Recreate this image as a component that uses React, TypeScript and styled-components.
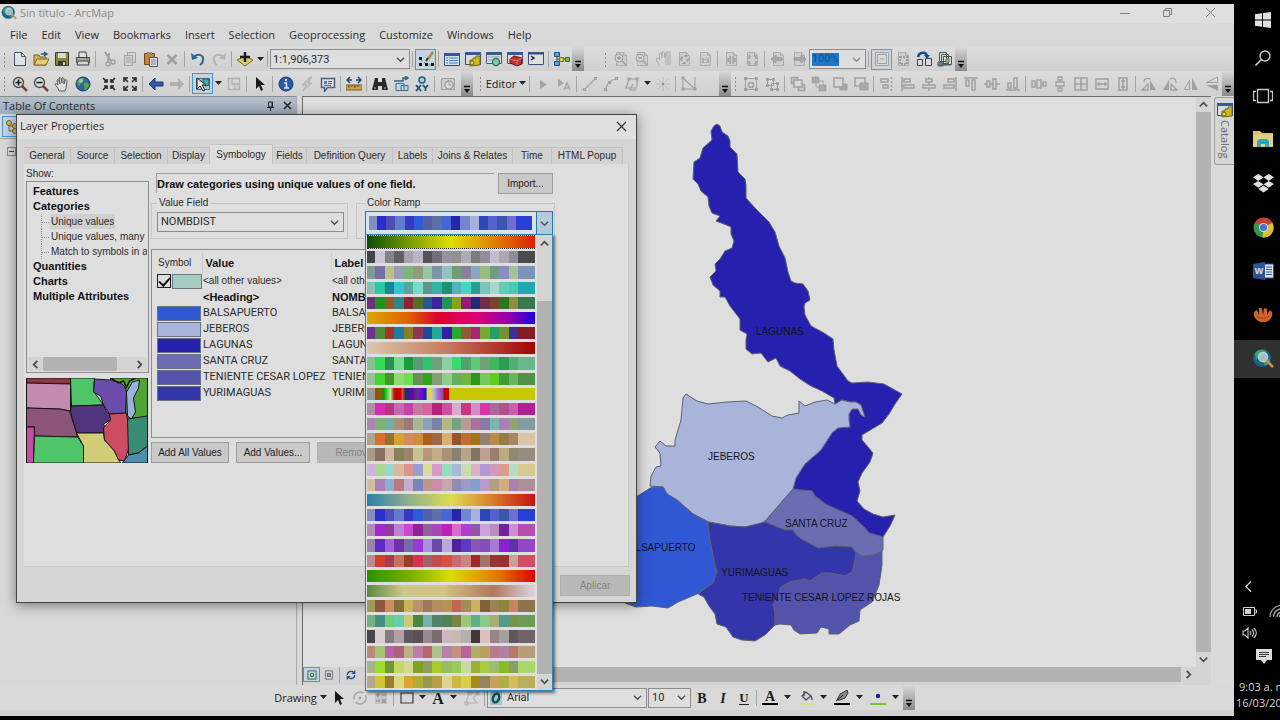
import React from "react";
import styled, { createGlobalStyle, css } from "styled-components";

const ui = `"Open Sans", "Noto Sans", sans-serif`;
const sans = `"Liberation Sans", Arial, sans-serif`;
const serif = `"Liberation Serif", "Times New Roman", serif`;
const caps = `11px/14px Roboto, ${sans}`;

const GlobalStyle = createGlobalStyle`
  * { box-sizing: border-box; }
  body { margin: 0; background: #000; overflow: hidden; }
  button, input, select { font: inherit; color: inherit; margin: 0; }
  button { border: 0; background: none; padding: 0; white-space: nowrap; }
  svg { display: block; flex: none; }
`;

/* ---------- icons ---------- */

const G = "#a0a0a0";
const page = <path d="M3.500 1.500h7l3 3v10h-10z M10.500 1.500v3h3" fill="#cfcfcf" stroke="#acacac" />;
const letter = { fontFamily: serif, fontWeight: "bold", fill: "#1c1c1c", textAnchor: "middle" as const };

const glyphs: Record<string, React.ReactNode> = {
  "New": <><path d="M2.500 1.500h7l4 4v9h-11z" fill="#dfe3e8" stroke="#4c5666" /><path d="M9.500 1.500v4h4" fill="none" stroke="#4c5666" /></>,
  "Open": <><path d="M1 14V4h5l1 2h6v8z" fill="#d0b458" stroke="#7c6424" /><path d="M1 14l3-6h12l-3 6z" fill="#e0cc78" stroke="#7c6424" /><path d="M8 3h5M11 1l3 2-3 2" fill="none" stroke="#1c5c9c" strokeWidth="1.500" /></>,
  "Save": <><path d="M1.500 1.500h13v13h-13z" fill="#8c8434" stroke="#3c3c24" /><path d="M4 2h8v5H4z" fill="#d8dccc" /><path d="M4 10h8v4H4z" fill="#3c3c34" /><path d="M9 11h2v3H9z" fill="#ccc" /></>,
  "Print": <><path d="M4 1h7l1 6H4z" fill="#dcdcdc" stroke="#444" /><path d="M1.500 6.500h13v5h-13z" fill="#a4a8a4" stroke="#404440" /><path d="M3 10h10l1 4H2z" fill="#d4d8c8" stroke="#404440" /><path d="M11 8h2" stroke="#3c9c3c" /></>,
  "Cut": <><path d="M4 1l6 9M8 2L7 10" fill="none" stroke={G} strokeWidth="2" /><circle cx="12" cy="11" r="2" fill="none" stroke={G} strokeWidth="1.500" /><circle cx="7" cy="13" r="2" fill="none" stroke={G} strokeWidth="1.500" /></>,
  "Copy": <><path d="M5.500 1.500h8v10h-8z" fill="#d4d4d4" stroke={G} /><path d="M2.500 4.500h8v10h-8z" fill="#d4d4d4" stroke={G} /><path d="M4 7h5M4 9h5M4 11h5" stroke={G} /></>,
  "Paste": <><path d="M1.500 2.500h10v11h-10z" fill="#c48434" stroke="#6c4818" /><path d="M4 1h5v3H4z" fill="#8c8c84" /><path d="M6.500 6.500h8v9h-8z" fill="#dcdce0" stroke="#505868" /><path d="M8 9h5M8 11h5M8 13h5" stroke="#7888a4" /></>,
  "Delete": <path d="M3.500 4l9 9M12.500 4l-9 9" stroke={G} strokeWidth="2.500" />,
  "Undo": <><path d="M4 6c4-4 10-2 9 3 0 3-2 4-3 5" fill="none" stroke="#2c6494" strokeWidth="2" /><path d="M1 2l1 7 6-2z" fill="#2c6494" /></>,
  "Redo": <><path d="M12 6c-4-4-10-2-9 3 0 3 2 4 3 5" fill="none" stroke="#b4b4b4" strokeWidth="2" /><path d="M15 2l-1 7-6-2z" fill="#b4b4b4" /></>,
  "Add Data": <><path d="M0 9l8-4 8 4-8 6z" fill="#dccc64" stroke="#7c6c2c" /><path d="M8 1v10M3 6h10" stroke="#181818" strokeWidth="2.500" /></>,
  "Editor Toolbar": <><path d="M10 8l5-7" stroke="#b48c34" strokeWidth="2.500" /><path d="M8 10l2-3" stroke="#333" strokeWidth="2" /><path d="M2 7l2 3 3 2 4 2h4" fill="none" stroke="#555" strokeDasharray="1 2" /><path d="M1 12h3v3H1zM7 12h3v3H7zM13 12h3v3h-3zM1 6h3v3H1z" fill="#141414" /></>,
  "Contents": <><path d="M.5 2.500h15v12H.5z" fill="#d8dce4" stroke="#344c7c" /><path d="M0 2h16v3H0z" fill="#345c94" /><path d="M2 7h2M5 7h9M2 9.500h2M5 9.500h9M2 12h2M5 12h9" stroke="#4c84b8" /></>,
  "Catalog": <><path d="M.5 1.500h15v12H.5z" fill="#dcdcdc" stroke="#344c7c" /><path d="M0 1h16v3H0z" fill="#345c94" /><path d="M5 9h3V7h3V5h4v9l-10 1z" fill="#c8b824" stroke="#74680c" /><circle cx="7" cy="12" r="2" fill="#e0d448" stroke="#74680c" /></>,
  "Search Window": <><path d="M.5 1.500h15v11H.5z" fill="#dcdcdc" stroke="#4c5c7c" /><path d="M0 1h16v3H0z" fill="#345c94" /><path d="M2 6h12M2 9h5" stroke="#8ca0b8" /><circle cx="10" cy="11" r="3.500" fill="#8cc8b0" stroke="#2c7c6c" strokeWidth="1.500" /></>,
  "ArcToolbox": <><path d="M.5 1.500h15v11H.5z" fill="#dcdcdc" stroke="#4c5c7c" /><path d="M0 1h16v3H0z" fill="#345c94" /><path d="M3 8l4-3 8 2v6l-5 2-7-3z" fill="#b8342c" stroke="#74140c" /><path d="M3 8l7 2 5-3M10 10v4" fill="none" stroke="#e08474" /></>,
  "Python": <><path d="M.5 1.500h15v12H.5z" fill="#e0e0e4" stroke="#3c4c7c" /><path d="M0 1h16v2.500H0z" fill="#3c4c84" /><path d="M3 5l3 2-3 2" fill="none" stroke="#222" strokeWidth="1.500" /></>,
  "ModelBuilder": <><path d="M3 4v8M3 8h11" stroke="#444" /><path d="M.5 1.500h5v4h-5zM.5 10.500h5v4h-5z" fill="#58a0d8" stroke="#1c5088" /><path d="M5.500 6.500h4v4h-4z" fill="#e0c850" stroke="#7c6c14" /><path d="M11.500 6.500h4v4h-4z" fill="#78c050" stroke="#347014" /></>,
  "Layout Zoom In": <>{page}<circle cx="6" cy="7" r="4" fill="#d0d0d0" stroke={G} /><path d="M4 7h4M6 5v4M9 10l4 4" stroke={G} strokeWidth="1.500" /></>,
  "Layout Zoom Out": <>{page}<circle cx="6" cy="7" r="4" fill="#d0d0d0" stroke={G} /><path d="M4 7h4M9 10l4 4" stroke={G} strokeWidth="1.500" /></>,
  "Layout Pan": <path d="M4 14L1 8l2-1 2 2-1-6 2-1 1 5V1h2l1 6 1-5 2 1v11M11 14V1h4v13" fill="none" stroke="#acacac" />,
  "Whole Page": <>{page}<path d="M5 8l2-3h3l2 3-2 4H7z" fill="none" stroke={G} strokeWidth="2" strokeDasharray="3 2" /></>,
  "Actual Size": <>{page}<path d="M6 7v5M11 7v5M8.500 8v1M8.500 11v1" stroke={G} strokeWidth="1.500" /></>,
  "Fixed Zoom Page": <>{page}<path d="M7 5v3H4M10 5v3h3M7 13v-3H4M10 13v-3h3" fill="none" stroke={G} strokeWidth="1.500" /></>,
  "Fixed Out Page": <>{page}<path d="M5 8V5h2M12 8V5h-2M5 10v3h2M12 10v3h-2" fill="none" stroke={G} strokeWidth="1.500" /></>,
  "Previous Page": <>{page}<path d="M1 8l5-4v2.500h6v3H6V12z" fill="#a8a8a8" stroke={G} /></>,
  "Next Page": <>{page}<path d="M15 8l-5-4v2.500H3v3h7V12z" fill="#a8a8a8" stroke={G} /></>,
  "Draft Mode": <><path d="M1.500 1.500h13v13h-13z" fill="#d8d8d8" stroke="#9ca4a8" /><path d="M3.500 3.500h9v9h-9zM6 8h4" fill="none" stroke="#9ca4a8" /></>,
  "Focus Frame": <>{page}<path d="M5 6h7v7H5z" fill="none" stroke={G} strokeWidth="2" strokeDasharray="2 1" /></>,
  "Change Layout": <><path d="M1.500 8.500h5v6h-5zM9.500 7.500h6v7h-6z" fill="#d8d8d8" stroke="#3c444c" /><path d="M2 6c1-5 8-6 9-1" fill="none" stroke="#1c4c84" strokeWidth="2.500" /><path d="M8 4h6l-3 4z" fill="#1c4c84" /></>,
  "Data Driven Pages": <><path d="M2.500 1.500h7v9h-7zM4.500 3.500h7v9h-7zM6.500 5.500h8v8h-8z" fill="#d8dcd4" stroke="#4c545c" /><path d="M9 8h3v3H9z" fill="#b4c898" stroke="#5c8438" /><path d="M1 11h5v4H1zM1 14h13" fill="#7c8894" stroke="#4c5c6c" /></>,

  "Zoom In": <><circle cx="6.500" cy="6.500" r="5" fill="#d8dcdc" stroke="#505458" strokeWidth="1.500" /><path d="M3.500 6.500h6M6.500 3.500v6" stroke="#222" strokeWidth="1.700" /><path d="M10 10l5 5" stroke="#7c4434" strokeWidth="2.500" /></>,
  "Zoom Out": <><circle cx="6.500" cy="6.500" r="5" fill="#d8dcdc" stroke="#505458" strokeWidth="1.500" /><path d="M3.500 6.500h6" stroke="#222" strokeWidth="1.700" /><path d="M10 10l5 5" stroke="#7c4434" strokeWidth="2.500" /></>,
  "Pan": <path d="M5 15c0-3-4-5-4-7 1-1 2 0 3 1L3 4c1-1 2 0 2 1l1 3-1-6c1-1 2 0 2 1l1 4V2c1-1 2 0 2 1v5l1-4c1-1 2 0 2 1-1 4 0 6-2 10z" fill="#dcdcdc" stroke="#585858" />,
  "Full Extent": <><circle cx="8" cy="8" r="7" fill="#2c64a4" stroke="#1c3c64" /><path d="M4 3c3-2 6-1 5 1S6 6 5 9 2 7 2 6zM9 7c3-1 5 0 5 2s-3 5-4 5 0-2-1-4z" fill="#58a448" /><circle cx="6" cy="5" r="2" fill="#b8dccc" opacity=".7" /></>,
  "Fixed Zoom In": <path d="M2 2l3 3M14 2l-3 3M2 14l3-3M14 14l-3-3M6 3v3H3M10 3v3h3M6 13v-3H3M10 13v-3h3" fill="none" stroke="#282828" strokeWidth="1.700" />,
  "Fixed Zoom Out": <path d="M2 2l4 4M14 2l-4 4M2 14l4-4M14 14l-4-4M2 6V2h4M14 6V2h-4M2 10v4h4M14 10v4h-4" fill="none" stroke="#282828" strokeWidth="1.600" />,
  "Back": <path d="M1 8l6-6v4h8v4H7v4z" fill="#2c5ca8" stroke="#1c3c74" />,
  "Forward": <path d="M15 8L9 2v4H1v4h8v4z" fill="#b0b0b0" />,
  "Select Features": <><path d="M1.500 2.500h13v11h-13z" fill="#a8c8c8" stroke="#50686c" /><path d="M8 3h6v6l-3 1-3-2z" fill="#3cb0b8" stroke="#345458" /><path d="M2 2v11l3-3 3 5 2-1-3-5h4z" fill="#e4e4e4" stroke="#222" /></>,
  "Clear Selection": <path d="M2.500 2.500h11v11h-11zM6 3v5h7M9 13V9" fill="none" stroke="#b0b0b0" strokeWidth="1.300" />,
  "Select Elements": <path d="M4 1v12l3-3 2 5 2-1-2-5h4z" fill="#181818" />,
  "Identify": <><circle cx="8" cy="8" r="7" fill="#245cac" stroke="#18386c" /><path d="M6 7h2.500v5M6 12h5" fill="none" stroke="#e8e8e8" strokeWidth="1.500" /><circle cx="8" cy="4" r="1.200" fill="#e8e8e8" /></>,
  "Hyperlink": <path d="M11 1L3 9h4l-3 6 9-8H9l4-6z" fill="#c4c4c4" stroke="#b0b0b0" />,
  "HTML Popup": <><path d="M1.500 2.500h13v9h-7l-3 4v-4h-3z" fill="#dce0e4" stroke="#44647c" strokeWidth="1.500" /><path d="M4 5h3v3H4z" fill="#4c84ac" /><path d="M8 5.500h4M8 7.500h4M4 9.500h7" stroke="#44647c" /></>,
  "Measure": <><path d="M0 9h16v5H0z" fill="#d0a44c" stroke="#7c5c24" /><path d="M3 9v3M6 9v2M9 9v3M12 9v2" stroke="#5c401c" /><path d="M1 4h5M10 4h5M4 1L1 4l3 3M12 1l3 3-3 3" fill="none" stroke="#1c4c7c" strokeWidth="1.500" /></>,
  "Find": <><path d="M3 2h3v4h4V2h3l3 12h-6v-4H6v4H0z" fill="#24282c" /><path d="M2 12h2M12 12h2" stroke="#b8b8b8" /></>,
  "Find Route": <><path d="M3 7.500h8v7H3zM8 9.500h7v5H8z" fill="#c0d8e4" stroke="#3c7090" /><path d="M1 5h9V2h4M12 0l3 2-3 2" fill="none" stroke="#2c6484" strokeWidth="1.500" /></>,
  "Go To XY": <><circle cx="8" cy="4" r="3" fill="#a8d0e0" stroke="#1c5c84" strokeWidth="1.500" /><path d="M2 9l5 6M7 9l-5 6M9 9l2.500 3L14 9M11.500 12v3" fill="none" stroke="#1c4c74" strokeWidth="1.700" /></>,
  "Time Slider": <><path d="M1.500 2.500h13v11h-13z" fill="#ccc" stroke={G} /><circle cx="9" cy="9" r="4" fill="#d8d8d8" stroke={G} strokeWidth="1.500" /><path d="M9 6v3h2" fill="none" stroke={G} /></>,
  "Edit Tool": <path d="M5 4v9l7-4.500z" fill="#a4a4a4" />,
  "Edit Annotation": <><path d="M2 3v8l6-4z" fill="#a4a4a4" /><path d="M8 14l3-7 3 7M9 12h4" fill="none" stroke="#a4a4a4" strokeWidth="1.500" /></>,
  "Straight Segment": <path d="M3 13L13 3M1.500 12.500h2v2h-2zM12.500 1.500h2v2h-2z" fill="none" stroke={G} strokeWidth="1.200" />,
  "End Point Arc": <path d="M3 13c1-6 4-9 10-10M1.500 12.500h2v2h-2zM5.500 5.500h2v2h-2zM12.500 1.500h2v2h-2z" fill="none" stroke={G} strokeWidth="1.200" />,
  "Trace": <path d="M2 12L5 3h8v8M4 2h2v2H4zM12 2h2v2h-2zM1 12h12M9 8l-3 6h6" fill="none" stroke={G} strokeWidth="1.200" />,
  "Point": <><path d="M8 1v4M8 11v4M1 8h4M11 8h4M3 3l3 3M10 10l3 3M13 3l-3 3M6 10l-3 3" stroke="#bcbcbc" /><circle cx="8" cy="8" r="1.500" fill="#909090" /></>,
  "Edit Vertices": <path d="M2 2l12 11H2zM1 1h2v2H1zM1 12h2v2H1zM13 12h2v2h-2zM14 1v12" fill="none" stroke={G} strokeWidth="1.100" />,
  "Group": <><path d="M2.500 2.500h11v11h-11z" fill="none" stroke={G} /><path d="M1 1h3v3H1zM12 1h3v3h-3zM1 12h3v3H1zM12 12h3v3h-3z" fill={G} /><circle cx="8" cy="9" r="2.500" fill="none" stroke={G} strokeWidth="1.500" /></>,
  "Ungroup": <><path d="M3.500 3.500h6v6h-6zM7.500 7.500h6v6h-6z" fill="none" stroke={G} /><path d="M2 2h3v3H2zM8 2h3v3H8zM2 8h3v3H2zM12 6h3v3h-3zM6 12h3v3H6zM12 12h3v3h-3z" fill={G} /></>,
  "Bring to Front": <><path d="M1.500 1.500h6v6h-6zM8.500 8.500h6v6h-6z" fill="#ccc" stroke={G} strokeWidth="1.500" /><path d="M4 4h8v7H4z" fill="#d8d8d8" stroke={G} strokeWidth="1.500" /></>,
  "Send to Back": <><path d="M5 5h7v6H5z" fill="#d8d8d8" stroke={G} /><path d="M1.500 1.500h6v5h-6zM8.500 9.500h6v5h-6z" fill="#acacac" stroke={G} strokeWidth="1.500" /></>,
  "Bring Forward": <><path d="M8 8h7v6H8z" fill="#a8a8a8" stroke={G} /><path d="M2 2h9v9H2z" fill="#d8d8d8" stroke={G} strokeWidth="1.500" /></>,
  "Send Backward": <><path d="M2 2h10v8H2z" fill="#d8d8d8" stroke={G} strokeWidth="1.500" /><path d="M7 7h8v7H7z" fill="#a8a8a8" stroke={G} /></>,
  "Align to Margins": <path d="M2 3h7v3H2zM4 9h5v3H4zM12.500 1v2M12.500 5v2M12.500 9v2M12.500 13v2" fill="none" stroke={G} strokeWidth="1.500" />,
  "Align Left": <path d="M2 1v14M4 3h6v3H4zM4 9h10v3H4z" fill="none" stroke={G} strokeWidth="1.500" />,
  "Align Center": <path d="M8 1v2M8 6v3M8 12v3M5 3h6v3H5zM2 9h12v3H2z" fill="none" stroke={G} strokeWidth="1.500" />,
  "Align Right": <path d="M14 1v14M6 3h6v3H6zM2 9h10v3H2z" fill="none" stroke={G} strokeWidth="1.500" />,
  "Align Top": <path d="M1 2h14M3 4h3v6H3zM9 4h3v10H9z" fill="none" stroke={G} strokeWidth="1.500" />,
  "Align Vertical Center": <path d="M0 8h3M6 8h3M12 8h4M3 5h3v6H3zM9 3h3v10H9z" fill="none" stroke={G} strokeWidth="1.500" />,
  "Align Bottom": <path d="M1 14h14M3 7h3v5H3zM9 2h3v10H9z" fill="none" stroke={G} strokeWidth="1.500" />,
  "Distribute Horizontally": <path d="M1 5h3v6H1zM6 4h4v8H6zM12 6h3v4h-3zM4 8h2M10 8h2" fill="none" stroke={G} strokeWidth="1.300" />,
  "Distribute Vertically": <path d="M6 1h4v3H6zM4 6h8v4H4zM6 12h4v3H6zM8 4v2M8 10v2" fill="none" stroke={G} strokeWidth="1.300" />,
  "Same Size": <path d="M2 2h12v12H2zM8 2v12M2 8h12" fill="none" stroke={G} strokeWidth="1.500" />,
  "Same Width": <path d="M2 3h12v10H2zM3 8h10M5 6v4M11 6v4" fill="none" stroke={G} strokeWidth="1.500" />,
  "Same Height": <path d="M4 2h8v12H4zM8 3v10M6 5h4M6 11h4" fill="none" stroke={G} strokeWidth="1.500" />,
  "Rotate Right": <><path d="M9 4l6 10H9z" fill={G} /><path d="M7 8v6H1zM3 6c0-4 4-4 6-3" fill="none" stroke={G} strokeWidth="1.300" /></>,
  "Rotate Left": <><path d="M7 4v10H1z" fill={G} /><path d="M9 8l6 6H9zM8 3c4-2 6 0 6 4" fill="none" stroke={G} strokeWidth="1.300" /></>,
  "Flip Horizontal": <><path d="M9 2l6 12H9z" fill={G} /><path d="M6.500 4v9.500h-5z" fill="none" stroke={G} /></>,
  "Flip Vertical": <><path d="M14 9v6L2 9z" fill={G} /><path d="M13.500 1v5.500h-11z" fill="none" stroke={G} /></>,

  "Rotate": <><circle cx="8" cy="8" r="6" fill="none" stroke="#a4a4a4" strokeWidth="1.500" strokeDasharray="14 3" /><circle cx="8" cy="8" r="1.500" fill="#a4a4a4" /></>,
  "Zoom to Elements": <><path d="M2 2h12v12H2z" fill="#c4c4c4" /><path d="M3 5h4M5 3v4M9 5h4M3 11h4M9 9l4 4M13 9l-4 4" stroke="#989898" strokeWidth="1.500" /></>,
  "Rectangle": <path d="M2 3h12v10H2z" fill="#d8d8d8" stroke="#3c3c3c" strokeWidth="1.200" />,
  "Text": <text x="8" y="14" fontSize="16" {...letter}>A</text>,
  "Edit Shape": <path d="M2 13l3-10h9l-5 5 4 5zM1 12h3v3H1zM4 2h3v3H4zM12 2h3v3h-3z" fill="none" stroke="#b4b4b4" strokeWidth="1.100" />,
  "Bold": <text x="8" y="13" fontSize="14" {...letter}>B</text>,
  "Italic": <text x="8" y="13" fontSize="14" fontStyle="italic" {...letter}>I</text>,
  "Underline": <><text x="8" y="12" fontSize="13" {...letter}>U</text><path d="M3 14.500h10" stroke="#222" /></>,
  "Font Color": <><text x="8" y="11" fontSize="14" {...letter}>A</text><path d="M0 13h16v2H0z" fill="#000" /></>,
  "Fill Color": <><path d="M4 6l4-4 5 4-5 4zM6 1v5M12 5c2 1 2 3 2 5" fill="#d4d4d4" stroke="#4c4c4c" strokeWidth="1.300" /><path d="M1 13h14v2H1z" fill="#dce08c" /></>,
  "Line Color": <><path d="M3 10l3-6 4-2 3-2 1 3-3 5-5 2z" fill="#8c8c88" stroke="#333" /><path d="M2 11l7-6" stroke="#222" /><path d="M0 13h16v2H0z" fill="#000" /></>,
  "Marker Color": <><circle cx="8" cy="6" r="2.200" fill="#1c1c98" /><path d="M0 13h16v2H0z" fill="#60d024" /></>,

  "Data View": <path d="M2.500 2.500h11v11h-11zM6 6h4v4H6z" fill="#b8dcb8" stroke="#3c6470" strokeWidth="1.300" />,
  "Layout View": <><path d="M3.500 2.500h9v11h-9z" fill="#dcdcdc" stroke="#505860" /><path d="M6 6h4v4H6z" fill="#8cb0c0" stroke="#446" /></>,
  "Refresh": <path d="M3 8c0-5 6-6 9-3M13 2v4H9M13 8c0 5-6 6-9 3M3 14v-4h4" fill="none" stroke="#1c4c84" strokeWidth="1.600" />,
  "Pause Drawing": <path d="M4 3h3v10H4zM9 3h3v10H9z" fill="#1c4c84" />,
};

function Ico({ name, size = 16 }: { name: string; size?: number }) {
  return <svg width={size} height={size} viewBox="0 0 16 16" aria-hidden="true">{glyphs[name]}</svg>;
}

const Chevron = ({ dir = "down", size = 9, color = "#505050", weight = 1.5 }: { dir?: "down" | "up" | "left" | "right"; size?: number; color?: string; weight?: number }) => {
  const d = { down: "M1 3l4 4 4-4", up: "M1 7l4-4 4 4", left: "M7 1L3 5l4 4", right: "M3 1l4 4-4 4" }[dir];
  return <svg width={size} height={size} viewBox="0 0 10 10" aria-hidden="true"><path d={d} fill="none" stroke={color} strokeWidth={weight} /></svg>;
};

/* ---------- shell ---------- */

const Screen = styled.div`
  display: flex;
  height: 100vh;
  background: #000;
  color: #2c2c2c;
  font: 11px/16px ${ui};
`;

const AppWindow = styled.div`
  position: relative;
  flex: 1;
  min-width: 0;
  display: flex;
  flex-direction: column;
  margin: 4px 0;
  background: #d0d0d0;
`;

const TitleBar = styled.header`
  display: flex;
  align-items: center;
  height: 19px;
  padding: 0 2px 2px 1px;
  background: #dedede;
  color: #8a8a8a;
`;

const AppTitle = styled.h1`
  flex: 1;
  margin: 0 0 0 3px;
  font: 11px/16px ${ui};
`;

const WindowButton = styled.button`
  display: grid;
  place-items: center;
  width: 43px;
  height: 14px;
`;

const MenuBar = styled.nav`
  display: flex;
  align-items: center;
  height: 24px;
  padding: 0 3px;
  background: #d9d9d9;
`;

const MenuItem = styled.button`
  padding: 0 7px;
  height: 20px;
`;

const ToolbarRow = styled.div<{ $h: number }>`
  display: flex;
  align-items: center;
  height: ${(p) => p.$h}px;
  overflow: hidden;
  background: linear-gradient(#dcdcdc, #d0d0d0);
`;

const Grip = styled.span`
  flex: none;
  width: 9px;
  height: 15px;
  background: radial-gradient(circle, #8c8c8c 1px, transparent 1px) 2px 0 / 5px 4px repeat-y;
`;

const Divider = styled.span<{ $blank?: boolean }>`
  flex: none;
  width: 5px;
  height: 16px;
  ${(p) => !p.$blank && css`background: linear-gradient(#a4a4a4, #a4a4a4) center / 1px 100% no-repeat;`}
`;

const ToolButton = styled.button<{ $on?: boolean; $muted?: boolean }>`
  display: grid;
  place-items: center;
  flex: none;
  width: 21px;
  height: 21px;
  ${(p) => p.$on && css`
    border: 1px solid ${p.$muted ? "#8494a0" : "#4c94cc"};
    background: ${p.$muted ? "#d0d4d8" : "#c0d4e2"};
  `}
`;

const DropButton = styled.button`
  display: grid;
  place-items: center;
  flex: none;
  width: 10px;
  height: 20px;
`;

const Overflow = styled.button`
  display: flex;
  align-items: flex-end;
  justify-content: center;
  align-self: stretch;
  flex: none;
  width: 12px;
  padding-bottom: 3px;
  background: linear-gradient(#d8d8d8, #8a8a8a);
`;

const Gap = styled.span<{ $w: number }>`
  flex: none;
  width: ${(p) => p.$w}px;
`;

const Triangle = () => <svg width="7" height="5" viewBox="0 0 7 5" aria-hidden="true"><path d="M0 0h7L3.500 4z" fill="#222" /></svg>;

const TextMenuButton = styled.button<{ $w: number }>`
  display: flex;
  align-items: center;
  justify-content: center;
  gap: 3px;
  flex: none;
  width: ${(p) => p.$w}px;
  height: 20px;
  color: #1c1c1c;
`;

const Combo = styled.label<{ $w: number }>`
  position: relative;
  display: flex;
  align-items: center;
  flex: none;
  width: ${(p) => p.$w}px;
  height: 20px;
  border: 1px solid #8c8c8c;
  background: #dedede;
  & > svg:last-child { position: absolute; right: 4px; pointer-events: none; }
`;

const ComboInput = styled.input`
  width: 100%;
  height: 18px;
  border: 0;
  padding: 0 2px;
  background: transparent;
  outline: 0;
  font: ${caps};
`;

const ZoomInput = styled.input`
  width: 27px;
  height: 13px;
  margin-left: 2px;
  border: 0;
  padding: 0;
  background: #1f78cc;
  color: #14508c;
  font: ${caps};
`;

const ComboSelect = styled.select`
  appearance: none;
  width: 100%;
  height: 18px;
  border: 0;
  padding: 0 3px;
  background: transparent;
  outline: 0;
  font: ${caps};
`;

const active = new Set(["Editor Toolbar", "Select Features", "Draft Mode"]);

function Tools({ items }: { items: (string | number)[] }) {
  return (
    <>
      {items.map((it, i) => {
        if (typeof it === "number") return <Gap key={i} $w={it} />;
        if (it === "|") return <Divider key={i} />;
        if (it === " ") return <Divider key={i} $blank />;
        if (it === ":") return <Grip key={i} />;
        if (it === "v") return <DropButton key={i} aria-label="More choices"><Triangle /></DropButton>;
        if (it === "more")
          return (
            <Overflow key={i} aria-label="Toolbar options">
              <svg width="8" height="8" viewBox="0 0 8 8"><path d="M1 1.500h6" stroke="#111" strokeWidth="1.500" /><path d="M1 4h6L4 8z" fill="#111" /></svg>
            </Overflow>
          );
        return (
          <ToolButton key={i} aria-label={it} $on={active.has(it)} $muted={it === "Draft Mode"}>
            <Ico name={it} />
          </ToolButton>
        );
      })}
    </>
  );
}

/* ---------- work area ---------- */

const Work = styled.div`
  display: flex;
  flex: 1;
  min-height: 0;
  background: #d8d8d8;
`;

const Contents = styled.aside`
  width: 297px;
  flex: none;
  border-right: 1px solid #a8a8a8;
  background: #d8d8d8;
`;

const ContentsHead = styled.div`
  display: flex;
  align-items: center;
  gap: 8px;
  height: 18px;
  padding: 0 4px 0 3px;
  border-top: 1px solid #8c8c8c;
  background: linear-gradient(#b4c0cc, #9cacba);
  h2 { flex: 1; margin: 0; font: 11px/16px ${ui}; }
`;

const ContentsTools = styled.div`
  padding: 2px;
  height: 25px;
  border-bottom: 1px solid #a4a4a4;
`;

const TreeToggle = styled.button`
  display: grid;
  place-items: center;
  width: 9px;
  height: 9px;
  margin: 8px 0 0 7px;
  border: 1px solid #8c8c8c;
`;

const MapPane = styled.main`
  display: flex;
  flex-direction: column;
  flex: 1;
  min-width: 0;
  margin-left: 5px;
  border: solid #6c6c6c;
  border-width: 1px 0 0 1px;
`;

const MapRow = styled.div`
  display: flex;
  flex: 1;
  min-height: 0;
`;

const MapCanvas = styled.div`
  flex: 1;
  min-width: 0;
  overflow: hidden;
  background: #dedede;
`;

const VScroll = styled.div`
  display: flex;
  flex-direction: column;
  flex: none;
  width: 15px;
  background: #d4d4d4;
`;

const HScroll = styled.div`
  display: flex;
  align-items: center;
  height: 18px;
  padding: 0 15px 3px 0;
  background: #d4d4d4;
`;

const Thumb = styled.div`
  flex: 1;
  align-self: stretch;
  background: #b2b2b2;
`;

const ScrollArrow = styled.button`
  display: grid;
  place-items: center;
  flex: none;
  width: 15px;
  height: 15px;
`;

const ViewButton = styled.button<{ $on?: boolean }>`
  display: grid;
  place-items: center;
  flex: none;
  width: 17px;
  height: 15px;
  ${(p) => p.$on && css`border: 1px solid #4c94cc; background: #c0d4e2;`}
`;

const Dock = styled.div`
  flex: none;
  width: 23px;
  padding: 1px 0 0 3px;
  background: #dadada;
`;

const DockTab = styled.button`
  display: flex;
  flex-direction: column;
  align-items: center;
  gap: 2px;
  width: 20px;
  height: 68px;
  padding-top: 4px;
  border: 1px solid #9c9c9c;
  border-right: 0;
  border-radius: 3px 0 0 3px;
  background: #d6d6d6;
  color: #6c6c6c;
  span { writing-mode: vertical-rl; line-height: 14px; }
`;

const DrawingBar = styled.footer`
  display: flex;
  align-items: center;
  height: 25px;
  margin-bottom: 6px;
  padding-left: 273px;
  overflow: hidden;
  background: #d9d9d9;
  & > ${Combo} + ${Combo} { margin-left: 1px; }
`;

const hook = "835,404 842,400 850,402 856,402 861,405 865,417 861,415 858,409 852,409 849,414 849,420 850,427 838,428";
const districts: [string, string][] = [
  ["#2521ae", "717,124 720,126 722,132 728,136 730,141 730,147 737,154 738,172 745,179 746,185 746,198 755,208 769,222 775,232 779,246 785,258 788,272 791,281 795,283 803,284 808,291 810,300 805,303 804,307 805,315 811,326 824,333 833,339 834,350 837,366 848,381 852,383 868,382 884,384 902,394 895,404 889,414 882,423 872,429 862,435 862,440 868,447 873,453 870,462 862,473 858,482 860,491 857,501 864,509 873,514 883,517 895,515 890,526 883,537 869,533 864,527 852,516 843,512 827,505 815,496 812,491 800,490 793,489 796,478 805,464 821,450 832,433 838,428 850,427 849,414 852,409 858,409 861,415 865,417 861,405 856,402 850,402 842,400 835,404 834,398 822,391 811,386 800,379 790,371 780,366 776,358 768,362 761,353 752,354 746,349 746,340 747,334 740,330 740,319 730,306 725,297 720,297 720,291 713,285 710,277 716,271 715,264 720,259 725,251 732,248 734,241 731,234 731,227 724,224 716,221 720,216 712,213 709,206 708,197 701,191 698,184 693,179 694,162 700,158 703,148 712,140 711,131 714,126"],
  ["#a9b4da", `686,394 697,401 708,404 727,402 746,401 758,407 772,416 782,418 788,415 799,413 799,401 805,406 815,402 827,400 ${hook} 832,433 821,450 805,464 796,478 793,489 780,504 765,521 758,525 745,527 730,526 709,522 693,514 677,500 667,494 663,487 650,486 651,476 656,467 661,466 660,453 655,447 660,441 666,446 675,446 675,440 681,420 683,398`],
  ["#3158d4", "600,500 625,504 644,492 652,487 663,487 667,494 677,500 693,514 708,522 710,540 714,560 717,572 713,583 697,594 678,602 668,608 652,606 636,607 625,603"],
  ["#6b6db2", "793,489 800,490 812,491 815,496 827,505 843,512 852,516 864,527 869,533 883,537 883,550 874,555 862,556 856,552 852,547 835,546 818,548 807,542 797,536 793,530 785,530 765,522 780,504"],
  ["#3336ab", "708,522 730,526 745,527 765,522 785,530 793,530 797,536 807,542 818,548 835,546 852,547 856,553 855,561 852,572 845,576 830,573 822,573 810,581 805,579 790,582 780,588 778,598 773,604 775,612 775,625 765,635 755,641 742,640 733,637 726,627 717,624 715,614 709,606 704,597 698,594 713,583 717,572 714,560 710,540"],
  ["#5453ab", "856,552 862,556 874,555 882,551 882,565 879,585 872,602 860,610 859,621 850,625 839,634 829,634 829,629 821,627 817,633 800,634 794,630 791,625 780,624 775,625 775,612 773,604 778,598 780,588 790,582 805,579 810,581 822,573 830,573 845,576 852,572 855,561"],
];
const mapLabels: [string, number, number][] = [
  ["LAGUNAS", 756, 335], ["JEBEROS", 708, 460], ["SANTA CRUZ", 785, 527],
  ["BALSAPUERTO", 622, 551], ["YURIMAGUAS", 721, 576], ["TENIENTE CESAR LOPEZ ROJAS", 742, 601],
];

const MapDrawing = styled.svg`
  text { font: 10px ${sans}; fill: #14141c; }
`;

/* ---------- dialog ---------- */

const Dialog = styled.section`
  position: absolute;
  left: 16px;
  top: 110px;
  z-index: 5;
  width: 621px;
  height: 489px;
  border: 1px solid #444;
  background: #d5d5d5;
  box-shadow: 0 2px 12px rgba(0, 0, 0, 0.45);
  font: 10px/14px ${sans};
`;

const DialogTitle = styled.div`
  display: flex;
  align-items: center;
  justify-content: space-between;
  height: 24px;
  padding: 0 9px 2px 3px;
  background: #dfdfdf;
  h2 { margin: 0; font: 11px/16px ${ui}; }
`;

const Tabs = styled.div`
  display: flex;
  align-items: flex-end;
  height: 25px;
  margin: 0 7px;
`;

const Tab = styled.button<{ $w: number; $on?: boolean }>`
  flex: none;
  width: ${(p) => p.$w}px;
  height: ${(p) => (p.$on ? 20 : 17)}px;
  border: 1px solid #c2c2c2;
  border-width: 1px 1px 0 0;
  background: ${(p) => (p.$on ? "#dedede" : "#d2d2d2")};
`;

const TabPage = styled.div`
  display: flex;
  gap: 2px;
  height: 403px;
  margin: 0 7px;
  padding: 2px;
  border: 1px solid #c8c8c8;
  border-width: 0 1px 1px 0;
  background: #dedede;
`;

const ShowColumn = styled.div`
  display: flex;
  flex-direction: column;
  flex: none;
  width: 123px;
  p { margin: 0; line-height: 15px; }
`;

const ShowList = styled.div`
  display: flex;
  flex-direction: column;
  height: 192px;
  margin-bottom: 5px;
  padding: 2px 1px 1px;
  border: 1px solid #8c8c8c;
  ul { flex: 1; margin: 0; padding: 0 0 0 5px; list-style: none; overflow: hidden; }
`;

const ShowGroup = styled.li`
  font: bold 11px/15px ${sans};
  color: #111;
`;

const ShowItem = styled.li<{ $on?: boolean }>`
  display: flex;
  gap: 1px;
  margin-left: 8px;
  height: 15px;
  line-height: 15px;
  white-space: nowrap;
  border-left: 1px dotted #8c8c8c;
  &::before { content: ""; flex: none; width: 7px; height: 8px; border-bottom: 1px dotted #8c8c8c; }
  span { padding: 0 1px; ${(p) => p.$on && "background: #d0d0d0;"} }
`;

const ListScroll = styled.div`
  display: flex;
  height: 14px;
  background: #d4d4d4;
  & > div { margin-right: 15px; }
`;

const MainColumn = styled.div`
  display: flex;
  flex-direction: column;
  width: 404px;
  padding-top: 7px;
`;

const HeadRow = styled.div`
  display: flex;
  gap: 4px;
  padding-left: 5px;
`;

const Heading = styled.h3`
  width: 338px;
  height: 20px;
  margin: 0;
  border: solid #9c9c9c;
  border-width: 1px 0 0 1px;
  font: bold 11px/20px ${sans};
  color: #111;
`;

const PushButton = styled.button<{ $w: number }>`
  flex: none;
  width: ${(p) => p.$w}px;
  height: 21px;
  border: 1px solid #9c9c9c;
  background: #c9c9c9;
  color: #222;
  &:disabled { background: #b8b8b8; border-color: #b0b0b0; color: #848484; }
`;

const Fields = styled.div`
  display: flex;
  gap: 8px;
  margin-top: 3px;
`;

const Group = styled.fieldset<{ $w: number; $pad: number }>`
  width: ${(p) => p.$w}px;
  min-width: 0;
  height: 42px;
  margin: 0;
  padding: ${(p) => (p.$pad > 5 ? 2 : 3)}px ${(p) => p.$pad}px 0;
  border: 1px solid #c4c4c4;
  legend { padding: 0 2px; line-height: 12px; }
`;

const RampPicker = styled.div`
  position: relative;
  width: 188px;
`;

const RampButton = styled.button`
  display: flex;
  width: 188px;
  height: 24px;
  border: 1px solid #2c74a4;
  background: #d8e4ec;
  & > span:first-child { flex: 1; align-self: stretch; padding: 3px 4px 3px 3px; display: flex; }
  & > span:last-child { display: grid; place-items: center; align-self: stretch; width: 16px; border-left: 1px solid #2c74a4; background: #b0ccdc; }
`;

const RampPopup = styled.div`
  position: absolute;
  left: 0;
  top: 23px;
  z-index: 2;
  display: flex;
  width: 188px;
  height: 457px;
  border: 1px solid #2c84b4;
  background: #dedede;
  box-shadow: 2px 2px 3px rgba(0, 0, 0, 0.55);
`;

const RampList = styled.div`
  display: flex;
  flex-direction: column;
  flex: 1;
  gap: 1px;
  padding: 0 2px 1px 1px;
`;

const Ramp = styled.div<{ $paint: string; $focus?: boolean }>`
  flex: 1;
  border: 1px ${(p) => (p.$focus ? "dotted #222" : "solid transparent")};
  border-width: 1px 0;
  background: ${(p) => p.$paint} padding-box;
`;

const PopupScroll = styled(VScroll)`
  padding: 1px 0;
  & > div { margin-top: 50px; }
`;

const ValueBox = styled.div`
  height: 189px;
  width: 398px;
  margin-top: 10px;
  padding-top: 3px;
  border: 1px solid #8c8c8c;
  overflow: hidden;
`;

const ValueTable = styled.table`
  table-layout: fixed;
  width: 396px;
  border-collapse: collapse;
  th, td { height: 16px; padding: 0 0 0 1px; overflow: hidden; text-align: left; white-space: nowrap; }
  th { height: 20px; padding-left: 3px; border-right: 1px solid #ccc; font: bold 11px/14px ${sans}; color: #111; }
  th:first-child { padding-left: 6px; font: 10px/14px ${sans}; color: #2c2c2c; }
  td:first-child { padding-left: 5px; }
`;

const HeadingCell = styled.td`
  font: bold 11px/14px ${sans};
  color: #111;
`;

const NameCell = styled.td`
  font: ${caps};
`;

const Swatch = styled.span<{ $c: string; $w?: number }>`
  display: block;
  width: ${(p) => p.$w || 44}px;
  height: 15px;
  border: 1px solid #6c7484;
  background: ${(p) => p.$c};
`;

const CheckSwatch = styled.label`
  display: flex;
  gap: 1px;
`;

const Check = styled.input`
  appearance: none;
  display: grid;
  place-items: center;
  width: 14px;
  height: 14px;
  border: 1px solid #222;
  &:checked::after {
    content: "";
    width: 5px;
    height: 9px;
    border: solid #111;
    border-width: 0 2px 2px 0;
    transform: rotate(42deg);
  }
`;

const ButtonRow = styled.div`
  display: flex;
  gap: 7px;
  margin-top: 4px;
`;

const DialogFooter = styled.div`
  display: flex;
  justify-content: flex-end;
  padding: 8px 6px 0;
`;

const mono = (s: string) => {
  const colors = s.split(" ");
  const total = 16 + 19 * 15 + 33;
  let at = 0;
  const stops = colors.map((c, i) => {
    const from = at;
    at += i === 0 ? 16 : i === colors.length - 1 ? 33 : 19;
    return `#${c} ${(from / total) * 100}% ${(at / total) * 100}%`;
  });
  return `linear-gradient(90deg, ${stops.join(", ")})`;
};
const blend = (s: string) => `linear-gradient(90deg, ${s})`;

const blues = mono("848cc0 2c2cd0 504cb8 607cd0 3838c0 2c5cdc 585ca8 5c70a4 4468d8 2824ac 7088d0 a8b0dc 2c48b8 5460d0 3858ac 746cd0 2840d8");

const ramps = [
  blend("#0a4a0a, #789c00 25%, #dede00 50%, #e07000 80%, #dc1e00"),
  mono("454448 cbc6d6 85828c 616064 a6a2ae bab4c8 545358 706e78 98929f 919094 aeabb4 7c7b7f 908c98 c2bdce aaa6b4 918c99 4b4b4d"),
  mono("7a9c94 7670a4 b9c088 9a9cb8 7cb67c 929c78 98c6a4 7a94a8 92c2be 729c76 86829c 8aa4c4 9aba80 6c9e86 8a8cc4 a6c09a 7c94bc"),
  mono("86c0b4 2ac8a4 1c8494 30c8d4 58a69c 78dccc 5e9490 34b4a4 1c9074 54b0bc 40d8c0 2a9c94 78c4b8 a4d8cc 62ccb4 48ccae 20aab0"),
  mono("6a3478 1e9420 945a24 308488 8c2434 546c2c 245a8c 40249c 209458 8ca020 901c74 202a78 70304c 784430 2c7420 908c40 387850"),
  blend("#dca800, #e06000 25%, #dc0030 42%, #dc0074 65%, #9000b0 85%, #1c00d8"),
  mono("6c3090 4c8c34 a43424 1c7ca4 8c7c24 903450 1c4c94 20ac94 3020a8 28ac2c 945a34 ac2478 70ac2c 24a064 789030 3c3094 841c24"),
  blend("#dcc8ac, #c88064 45%, #a00404"),
  mono("86c090 34dc54 2c9054 70dc8c 1c9c38 5c9c74 2cc46c 70a080 8cd0a0 34dc70 54a070 5ccc74 70a078 3cb854 28a050 50b070 68b88c"),
  mono("98c090 40d830 48942c 90d870 70dc50 649050 34a41c 849c74 90cc8c 64b05c 74b43c 309420 74c85c 60cc20 409c30 68b460 509048"),
  blend("#989898 5%, #a04800 5%, #806000 8%, #109010 10%, #30e030 12%, #d8d8a0 14%, #a03010 16%, #c80000 17% 20%, #e05040 21%, #303030 23%, #1030a0 24%, #7000a0 27%, #504080 30%, #9000d8 32%, #1020c0 35%, #d8d860 36% 38%, #a0c0d8 40%, #c060d0 42%, #8050a0 45%, #c80000 46% 49%, #c8c800 49%"),
  mono("b08cac dc28b4 b8347c c468b4 c840a8 c878a0 dc609c b8207c d0509c dca8d0 d03480 d48cc4 dc34a8 b0649c b4508c d05cb0 b02094"),
  mono("a888ac 7eb078 74aca8 a89474 a07878 a4b894 8ca0b8 7c80a8 b4b880 74a484 b89c94 a8749c 8c78a4 78b8a8 a880b4 90a470 849c9c"),
  mono("b0a48c d87028 947038 d8a030 d08c60 d08c40 a8601c 9c6848 d8b070 985428 c06c38 a07420 948070 b88c48 948044 a88860 dcc4a8"),
  mono("a89c88 887060 d0b4a4 848058 9c8468 c4c498 b89478 c4ac88 a89474 888070 b8a484 847464 bca094 9c7c6c b8ac80 908870 988c7c"),
  mono("ccb4dc a8d894 94d8d0 dcb89c dc9490 9c9cd4 dcdc94 d898c8 98dcc0 a8b8d8 c8dcb0 dcb0c4 b498d4 d498b8 dc9c8c b4dcc4 d8c894"),
  mono("d0c0a0 ac80b8 88b0cc b87c80 c8acd0 7c84b8 bc9884 c88cac c8a4ac 8c8cb4 9c98cc 80a0cc bc98cc b0a080 d4ac80 a880b0 ac9094"),
  blend("#2c80a8, #90b088 25%, #dcdc54 50%, #d88830 72%, #c81010"),
  blues,
  mono("b488b8 a828d0 903c9c c080d0 cc48d0 90209c 94609c a448b8 bc20b8 d46cd0 b040cc 9058a4 d0a0d8 b88cc0 74209c cc90cc b84cb0"),
  mono("9c80b0 6028c8 a060d8 7030a8 7868ac 9838d8 a890d8 6848a8 b8a8dc 5020a0 6038c8 8858b4 8050c0 a878d8 8c20d0 5c34a8 9448c8"),
  mono("b88c90 d83c30 a83c54 c87060 9c3c28 d83050 a06468 c04c50 dc5040 cc6878 cc8480 a82428 a07468 983438 a02c34 c8a498 d44c64"),
  blend("#289400, #88b800 30%, #dcdc00 50%, #e07000 80%, #dc0000"),
  blend("#5c8848, #ccc888 22%, #d4c484 45%, #b07860 75%, #dcd4dc"),
  mono("9c9c58 8c5840 cc8c60 84703c c8b458 b89468 9c785c b0905c b49450 c06850 a48c54 c8b060 806438 98844c 8c8438 c88460 8c744c"),
  mono("74b080 488c88 70cc78 68ccb0 c8cc74 488844 78b0ac 508464 508458 788444 98c878 5cb084 88c888 a8ac74 509c88 78944c 6c9c54"),
  mono("484448 dcccd0 847c80 b0a0a4 605860 5c5054 98888c 786c70 ccb8bc c8b8b4 b4b0b0 403838 dcc0c0 988488 a4a0a0 5c585c 706468"),
  mono("b88878 a4c470 b864ac b0607c bcb084 c07ca8 b86868 a8c488 b880ac c49080 b86494 acb064 b8a060 b87890 b080a4 b87868 b89c78"),
  mono("a4b484 98dc2c 709838 c4d860 d4d890 7ca420 8c9c60 a8cc28 98bc60 98cc58 ccd8a4 98b038 a8cc40 98bc70 8cbc24 8c9c68 a8d868"),
  mono("b4a888 ccc830 987c30 dcd880 dca430 b0ac3c 98984c b4a044 dcd490 ccb840 d8d048 a48c1c 948460 c8a058 b0b040 d8b860 b8b058"),
];

const states: [string, string][] = [
  ["#50a434", "84,0 121,0 121,40 84,40"],
  ["#8c383c", "0,0 44,0 44,6 0,5"],
  ["#c48cac", "0,5 44,6 44,33 33,31 0,30"],
  ["#50c468", "44,0 68,0 67,13 77,27 45,28"],
  ["#6c4cac", "68,1 84,2 92,4 98,8 100,14 99,35 83,36 77,27 74,18 67,14"],
  ["#98b4dc", "100,14 106,4 113,2 112,10 107,20 109,34 105,41 101,38"],
  ["#50347c", "45,28 77,27 80,34 84,37 84,42 77,46 79,51 77,55 50,55 44,34"],
  ["#8c5478", "0,30 33,31 43,33 50,55 51,59 8,58 8,49 0,49"],
  ["#c44ca4", "0,49 8,49 7,85 0,85"],
  ["#50c468", "8,58 51,59 57,68 57,85 7,85"],
  ["#d0cc78", "50,55 77,55 78,62 88,73 94,85 57,85 57,68"],
  ["#cc4c64", "83,36 100,35 102,48 103,68 98,83 92,82 88,73 78,62 77,50 84,42"],
  ["#388c74", "101,41 121,38 121,68 112,75 102,77"],
  ["#4c8cac", "102,77 112,75 121,68 121,85 96,85"],
];

const tabs: [string, number][] = [
  ["General", 47], ["Source", 44], ["Selection", 53], ["Display", 42], ["Symbology", 63], ["Fields", 34],
  ["Definition Query", 86], ["Labels", 40], ["Joins & Relates", 80], ["Time", 39], ["HTML Popup", 71],
];

const values: [string, string][] = [
  ["#3158d4", "BALSAPUERTO"], ["#a9b4da", "JEBEROS"], ["#2521ae", "LAGUNAS"],
  ["#6b6db2", "SANTA CRUZ"], ["#5453ab", "TENIENTE CESAR LOPEZ"], ["#3336ab", "YURIMAGUAS"],
];

function LayerProperties() {
  return (
    <Dialog role="dialog" aria-label="Layer Properties">
      <DialogTitle>
        <h2>Layer Properties</h2>
        <button aria-label="Close dialog">
          <svg width="11" height="11" viewBox="0 0 11 11"><path d="M1 1l9 9M10 1l-9 9" stroke="#333" strokeWidth="1.200" /></svg>
        </button>
      </DialogTitle>
      <Tabs role="tablist">
        {tabs.map(([t, w]) => <Tab key={t} role="tab" aria-selected={t === "Symbology"} $w={w} $on={t === "Symbology"}>{t}</Tab>)}
      </Tabs>
      <TabPage>
        <ShowColumn>
          <p>Show:</p>
          <ShowList>
            <ul>
              <ShowGroup>Features</ShowGroup>
              <ShowGroup>Categories</ShowGroup>
              <ShowItem $on><span>Unique values</span></ShowItem>
              <ShowItem><span>Unique values, many</span></ShowItem>
              <ShowItem><span>Match to symbols in a</span></ShowItem>
              <ShowGroup>Quantities</ShowGroup>
              <ShowGroup>Charts</ShowGroup>
              <ShowGroup>Multiple Attributes</ShowGroup>
            </ul>
            <ListScroll>
              <ScrollArrow aria-label="Scroll left"><Chevron dir="left" weight={2} /></ScrollArrow>
              <Thumb />
              <ScrollArrow aria-label="Scroll right"><Chevron dir="right" weight={2} /></ScrollArrow>
            </ListScroll>
          </ShowList>
          <svg width="122" height="85" viewBox="0 0 121 85" role="img" aria-label="Renderer preview">
            {states.map(([c, p], i) => <polygon key={i} points={p} fill={c} stroke="#181418" strokeLinejoin="round" />)}
            <path d="M84 0l8 5 5-2 3 6 3-6 6-3" fill="none" stroke="#181418" strokeWidth="1.500" />
          </svg>
        </ShowColumn>
        <MainColumn>
          <HeadRow>
            <Heading>Draw categories using unique values of one field.</Heading>
            <PushButton $w={55}>Import...</PushButton>
          </HeadRow>
          <Fields>
            <Group $w={197} $pad={5}>
              <legend>Value Field</legend>
              <Combo $w={187}>
                <ComboSelect aria-label="Value Field"><option>NOMBDIST</option></ComboSelect>
                <Chevron />
              </Combo>
            </Group>
            <Group $w={199} $pad={8}>
              <legend>Color Ramp</legend>
              <RampPicker>
                <RampButton aria-label="Color Ramp" aria-expanded="true">
                  <span><Ramp as="span" $paint={blues} /></span>
                  <span><Chevron /></span>
                </RampButton>
                <RampPopup role="listbox" aria-label="Color ramps">
                  <RampList>
                    {ramps.map((r, i) => <Ramp key={i} role="option" aria-selected={i === 0} $paint={r} $focus={i === 0} />)}
                  </RampList>
                  <PopupScroll>
                    <ScrollArrow aria-label="Scroll up"><Chevron dir="up" weight={2} /></ScrollArrow>
                    <Thumb />
                    <ScrollArrow aria-label="Scroll down"><Chevron weight={2} /></ScrollArrow>
                  </PopupScroll>
                </RampPopup>
              </RampPicker>
            </Group>
          </Fields>
          <ValueBox>
            <ValueTable>
              <colgroup><col width="50" /><col width="129" /><col /></colgroup>
              <thead><tr><th>Symbol</th><th>Value</th><th>Label</th></tr></thead>
              <tbody>
                <tr>
                  <td><CheckSwatch><Check type="checkbox" defaultChecked aria-label="Show all other values" /><Swatch $c="#a4ccc0" $w={30} /></CheckSwatch></td>
                  <td>&lt;all other values&gt;</td><td>&lt;all other values&gt;</td>
                </tr>
                <tr><td /><HeadingCell>&lt;Heading&gt;</HeadingCell><HeadingCell>NOMBDIST</HeadingCell></tr>
                {values.map(([c, v]) => <tr key={v}><td><Swatch $c={c} /></td><NameCell>{v}</NameCell><NameCell>{v}</NameCell></tr>)}
              </tbody>
            </ValueTable>
          </ValueBox>
          <ButtonRow>
            <PushButton $w={78}>Add All Values</PushButton>
            <PushButton $w={74}>Add Values...</PushButton>
            <PushButton $w={74} disabled>Remove</PushButton>
          </ButtonRow>
        </MainColumn>
      </TabPage>
      <DialogFooter><PushButton $w={70} disabled>Aplicar</PushButton></DialogFooter>
    </Dialog>
  );
}

/* ---------- taskbar ---------- */

const Taskbar = styled.aside`
  display: flex;
  flex-direction: column;
  flex: none;
  width: 46px;
  padding-top: 1px;
  overflow: hidden;
  background: #000;
  color: #d0d0d0;
`;

const TaskButton = styled.button<{ $on?: boolean }>`
  display: grid;
  place-items: center;
  flex: none;
  width: 58px;
  height: 38px;
  ${(p) => p.$on && "background: #303030;"}
`;

const Apps = styled.div`
  display: flex;
  flex-direction: column;
  gap: 6px;
  flex: 1;
  padding-top: 5px;
`;

const Tray = styled.div`
  display: grid;
  grid-template-columns: 26px 28px;
  grid-template-rows: 26px 24px 20px 26px;
  place-items: center;
  padding-left: 3px;
  width: 58px;
  & > :nth-child(1), & > :nth-child(4) { grid-column: 1 / 3; justify-self: start; margin-left: 5px; }
`;

const Notify = styled.button`
  grid-column: 1 / 3;
`;

const Clock = styled.div`
  padding: 10px 0 9px 2px;
  white-space: nowrap;
  p { margin: 0; }
  p:first-child { padding-left: 3px; }
`;

const Globe = ({ size }: { size: number }) => (
  <svg width={size} height={size} viewBox="0 0 22 22" aria-hidden="true">
    <circle cx="10" cy="10" r="9" fill="#1c6484" />
    <path d="M3 5c4-4 9-4 12-1l-3 3-5 1-3 4zM12 11c3-1 6 0 6 2l-4 5-3-3z" fill="#3c9c74" />
    <circle cx="11" cy="9" r="4.500" fill="#a8d0dc" opacity=".85" stroke="#d8e0e0" strokeWidth="1.500" />
    <path d="M14 12l7 7" stroke="#c09468" strokeWidth="2.500" />
  </svg>
);

export default function App() {
  return (
    <Screen>
      <GlobalStyle />
      <AppWindow>
        <TitleBar>
          <Globe size={16} />
          <AppTitle>Sin título - ArcMap</AppTitle>
          <WindowButton aria-label="Minimize"><svg width="10" height="10"><path d="M0 5.500h10" stroke="#808080" /></svg></WindowButton>
          <WindowButton aria-label="Restore"><svg width="11" height="11"><path d="M1.500 3.500h6v6h-6zM3.500 3.500v-2h6v6h-2" fill="none" stroke="#808080" /></svg></WindowButton>
          <WindowButton aria-label="Close"><svg width="11" height="11"><path d="M1 1l9 9M10 1l-9 9" stroke="#808080" /></svg></WindowButton>
        </TitleBar>
        <MenuBar>
          {["File", "Edit", "View", "Bookmarks", "Insert", "Selection", "Geoprocessing", "Customize", "Windows", "Help"].map((m) => <MenuItem key={m}>{m}</MenuItem>)}
        </MenuBar>
        <ToolbarRow $h={24}>
          <Tools items={[":", "New", "Open", "Save", "Print", "|", "Cut", "Copy", "Paste", "Delete", "|", "Undo", "Redo", "|", "Add Data", "v", "|"]} />
          <Combo $w={140}><ComboInput aria-label="Map scale" defaultValue="1:1,906,373" /><Chevron /></Combo>
          <Tools items={["|", "Editor Toolbar", "|", "Contents", "Catalog", "Search Window", "ArcToolbox", "Python", "|", "ModelBuilder", "more", 17, ":", "Layout Zoom In", "Layout Zoom Out", "Layout Pan", "Whole Page", "Actual Size", "|", "Fixed Zoom Page", "Fixed Out Page", "|", "Previous Page", "Next Page"]} />
          <Combo $w={57}><ZoomInput aria-label="Layout zoom" defaultValue="100%" /><Chevron color="#8c8c8c" /></Combo>
          <Tools items={["|", "Draft Mode", "Focus Frame", "Change Layout", "Data Driven Pages", "more"]} />
        </ToolbarRow>
        <ToolbarRow $h={25}>
          <Tools items={[":", "Zoom In", "Zoom Out", "Pan", "Full Extent", " ", "Fixed Zoom In", "Fixed Zoom Out", "|", "Back", "Forward", "|", "Select Features", "v", "Clear Selection", "|", "Select Elements", "|", "Identify", "Hyperlink", "HTML Popup", "|", "Measure", "|", "Find", "Find Route", "Go To XY", "|", "Time Slider", 3, "more", 3, ":"]} />
          <TextMenuButton $w={42}>Editor<Triangle /></TextMenuButton>
          <Tools items={["|", "Edit Tool", "Edit Annotation", "|", "Straight Segment", "End Point Arc", "Trace", "v", "Point", "|", "Edit Vertices", 20, "more", ":", "Group", "Ungroup", "|", "Bring to Front", "Send to Back", "Bring Forward", "Send Backward", "|", "Align to Margins", "Align Left", "Align Center", "Align Right", "Align Top", "Align Vertical Center", "Align Bottom", "|", "Distribute Horizontally", "Distribute Vertically", "Same Size", "Same Width", "Same Height", "|", "Rotate Right", "Rotate Left", "Flip Horizontal", "Flip Vertical", "more"]} />
        </ToolbarRow>
        <Work>
          <Contents>
            <ContentsHead>
              <h2>Table Of Contents</h2>
              <button aria-label="Auto hide"><svg width="9" height="10" viewBox="0 0 9 10"><path d="M2.500 1h4v5h-4zM1 6.500h7M4.500 7v3M6 1v5" fill="none" stroke="#222" /></svg></button>
              <button aria-label="Close contents"><svg width="9" height="9" viewBox="0 0 9 9"><path d="M1 1l7 7M8 1L1 8" stroke="#222" strokeWidth="1.500" /></svg></button>
            </ContentsHead>
            <ContentsTools>
              <ToolButton $on aria-label="List by drawing order">
                <svg width="16" height="16" viewBox="0 0 16 16"><path d="M4 4v8h5M4 7h6" fill="none" stroke="#666" /><circle cx="4" cy="4" r="2.500" fill="#d8b858" stroke="#7c6424" /><circle cx="10" cy="7" r="2.500" fill="#d8b858" stroke="#7c6424" /><circle cx="10" cy="12" r="2.500" fill="#d8b858" stroke="#7c6424" /></svg>
              </ToolButton>
            </ContentsTools>
            <TreeToggle aria-label="Collapse layers"><svg width="5" height="1"><path d="M0 .5h5" stroke="#444" /></svg></TreeToggle>
          </Contents>
          <MapPane>
            <MapRow>
              <MapCanvas>
                <MapDrawing width="894" height="568" viewBox="303 97 894 568" role="img" aria-label="District map">
                  {districts.map(([c, p]) => <polygon key={c} points={p} fill={c} stroke="#5c6070" strokeLinejoin="round" />)}
                  {mapLabels.map(([t, x, y]) => <text key={t} x={x} y={y}>{t}</text>)}
                </MapDrawing>
              </MapCanvas>
              <VScroll>
                <ScrollArrow aria-label="Scroll map up"><Chevron dir="up" weight={2} /></ScrollArrow>
                <Thumb />
                <ScrollArrow aria-label="Scroll map down"><Chevron weight={2} /></ScrollArrow>
              </VScroll>
            </MapRow>
            <HScroll>
              <ViewButton $on aria-label="Data View"><Ico name="Data View" size={12} /></ViewButton>
              <ViewButton aria-label="Layout View"><Ico name="Layout View" size={12} /></ViewButton>
              <Divider />
              <ViewButton aria-label="Refresh"><Ico name="Refresh" size={12} /></ViewButton>
              <ViewButton aria-label="Pause Drawing"><Ico name="Pause Drawing" size={12} /></ViewButton>
              <Thumb />
              <ScrollArrow aria-label="Scroll map right"><Chevron dir="right" weight={2} /></ScrollArrow>
            </HScroll>
          </MapPane>
          <Dock>
            <DockTab><Ico name="Catalog" /><span>Catalog</span></DockTab>
          </Dock>
        </Work>
        <DrawingBar>
          <TextMenuButton $w={55}>Drawing<Triangle /></TextMenuButton>
          <Tools items={["Select Elements", "Rotate", "Zoom to Elements", "|", "Rectangle", "v", "Text", "v", 3, "Edit Shape", "|"]} />
          <Combo $w={160}>
            <svg width="16" height="16" viewBox="0 0 16 16" aria-hidden="true"><path d="M2 1h12v14H2z" fill="#a4c4d4" /><ellipse cx="8" cy="8" rx="3" ry="4.500" fill="none" stroke="#14504c" strokeWidth="2.500" transform="rotate(20 8 8)" /></svg>
            <ComboSelect aria-label="Font"><option>Arial</option></ComboSelect><Chevron />
          </Combo>
          <Combo $w={43}><ComboSelect aria-label="Font size"><option>10</option></ComboSelect><Chevron /></Combo>
          <Tools items={["Bold", "Italic", "Underline", "|", "Font Color", 2, "v", 3, "Fill Color", 2, "v", 3, "Line Color", 2, "v", 3, "Marker Color", 2, "v", 3, "more"]} />
        </DrawingBar>
        <LayerProperties />
      </AppWindow>
      <Taskbar>
        <TaskButton aria-label="Start"><svg width="16" height="16" viewBox="0 0 16 16"><path d="M0 2.300l7-1v6.200H0zM8 1.100l8-1.100v7.500H8zM0 8.500h7v6.200l-7-1zM8 8.500h8V16l-8-1.100z" fill="#e0e0e0" /></svg></TaskButton>
        <TaskButton aria-label="Search"><svg width="16" height="16" viewBox="0 0 16 16"><circle cx="10" cy="6" r="5" fill="none" stroke="#c8c8c8" strokeWidth="1.400" /><path d="M6.500 9.500L.5 15.500" stroke="#c8c8c8" strokeWidth="1.600" /></svg></TaskButton>
        <TaskButton aria-label="Task View"><svg width="20" height="16" viewBox="0 0 20 16"><path d="M4.500 1.500h11v13h-11zM3 3.500H.5v9H3M17 3.500h2.500v9H17" fill="none" stroke="#c8c8c8" strokeWidth="1.300" /></svg></TaskButton>
        <Apps>
          <TaskButton aria-label="File Explorer"><svg width="20" height="18" viewBox="0 0 20 18"><path d="M0 1h7l2 2h11v14H0z" fill="#dcc468" /><path d="M0 5h20v11H0z" fill="#e4d080" /><path d="M4 17v-6l2-2h8l2 2v6h-4v-3H8v3z" fill="#34a4b8" /></svg></TaskButton>
          <TaskButton aria-label="Dropbox"><svg width="23" height="21" viewBox="0 0 22 20"><path d="M6 1l5 3-5 3.500L1 4zM16 1l5 3-5 3.500L11 4zM6 7.500l5 3.200-5 3.300-5-3.500zM16 7.500l5 3-5 3.500-5-3.300zM11 12l5 3.200-5 3.300-5-3.300z" fill="#e0e0e0" /></svg></TaskButton>
          <TaskButton aria-label="Chrome"><svg width="21" height="21" viewBox="0 0 20 20"><circle cx="10" cy="10" r="9.500" fill="#38964c" /><path d="M10 10L2 5a9.500 9.500 0 0 1 16.500 1z" fill="#cc3c30" /><path d="M10 10l8.500-4.500A9.500 9.500 0 0 1 9 19.500z" fill="#dcbc38" /><circle cx="10" cy="10" r="4.300" fill="#e0e0e0" /><circle cx="10" cy="10" r="3.400" fill="#3c74c8" /></svg></TaskButton>
          <TaskButton aria-label="Word"><svg width="21" height="18" viewBox="0 0 21 18"><path d="M11 2h9.500v14H11z" fill="#dce0e8" stroke="#2c5494" /><path d="M13 5h6M13 7.500h6M13 10h6M13 12.500h6" stroke="#2c5494" /><path d="M0 2l12-2v18L0 16z" fill="#2c5494" /><text x="6" y="12" fontSize="9" fontWeight="bold" fontFamily="Liberation Sans" fill="#e0e0e0" textAnchor="middle">W</text></svg></TaskButton>
          <TaskButton aria-label="Claw"><svg width="20" height="16" viewBox="0 0 20 16"><path d="M1 9c-1-4 2-6 3-6l2 5V1l3 0 1 7 1-7 3 1v6l3-5c3 2 3 5 1 8-3 6-14 6-17-2z" fill="#cc6428" /><path d="M4 9c3 3 8 3 12 0" fill="none" stroke="#9c4418" /></svg></TaskButton>
          <TaskButton $on aria-label="ArcMap"><Globe size={22} /></TaskButton>
        </Apps>
        <Tray>
          <button aria-label="Hidden icons"><Chevron dir="left" size={13} color="#c8c8c8" weight={1} /></button>
          <svg width="14" height="9" viewBox="0 0 14 9" role="img" aria-label="Battery"><path d="M.5.5h11v8H.5zM12 3h1.500v3H12" fill="none" stroke="#d0d0d0" /><path d="M2 2h6v5H2z" fill="#d0d0d0" /></svg>
          <svg width="16" height="14" viewBox="0 0 16 14" role="img" aria-label="Wi-Fi"><path d="M1 13C1 6 7 1 14 1M4.500 13C4.500 8 8 5 14 4.500M8 13c0-3 2-5 6-5" fill="none" stroke="#a8a8a8" strokeWidth="1.300" /><circle cx="12" cy="12" r="1.800" fill="#e0e0e0" /></svg>
          <svg width="15" height="12" viewBox="0 0 15 12" role="img" aria-label="Volume"><path d="M1 4h2l3-3v10L3 8H1z M8 4c1 1 1 3 0 4M10 2.500c2 2 2 5 0 7M12 1c3 3 3 7 0 10" fill="none" stroke="#d0d0d0" strokeWidth="1.100" /></svg>
          <Notify aria-label="Notifications"><svg width="16" height="15" viewBox="0 0 16 15"><path d="M0 0h16v11h-5l-3 4-3-4H0z" fill="#dcdcdc" /><path d="M3 3.500h10M3 5.500h10M3 7.500h7" stroke="#333" /></svg></Notify>
        </Tray>
        <Clock><p>9:03 a. m.</p><p>16/03/20</p></Clock>
      </Taskbar>
    </Screen>
  );
}
